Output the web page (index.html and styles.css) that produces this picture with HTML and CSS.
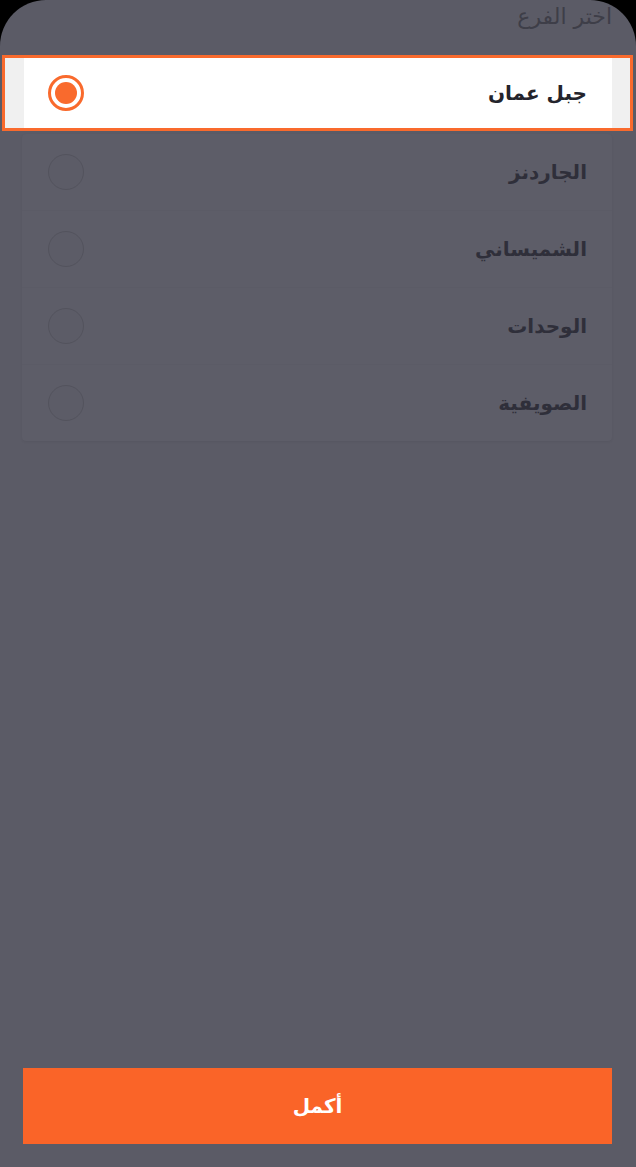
FILE: index.html
```html
<!DOCTYPE html>
<html lang="ar" dir="rtl">
<head>
<meta charset="utf-8">
<title>اختر الفرع</title>
<link rel="stylesheet" href="styles.css">
</head>
<body>
<div class="sheet">
  <div class="title">اختر الفرع</div>
  <div class="spotlight">
    <div class="row row-selected">
      <span class="label">جبل عمان</span>
      <span class="radio radio-on"><span class="dot"></span></span>
    </div>
  </div>
  <div class="card">
    <div class="row"><span class="label">الجاردنز</span><span class="radio"></span></div>
    <div class="row"><span class="label">الشميساني</span><span class="radio"></span></div>
    <div class="row"><span class="label">الوحدات</span><span class="radio"></span></div>
    <div class="row"><span class="label">الصويفية</span><span class="radio"></span></div>
  </div>
  <button class="btn">أكمل</button>
</div>
</body>
</html>
```
FILE: styles.css
```css
html, body {
  margin: 0;
  padding: 0;
  background: #000;
}
body {
  font-family: "DejaVu Sans", "Noto Sans", sans-serif;
}
.sheet {
  height: 1167px;
  box-sizing: border-box;
  background: #5b5b66;
  border-radius: 46px 46px 0 0;
  display: flex;
  flex-direction: column;
  padding-bottom: 23px;
}
.title {
  color: #3e3e48;
  font-size: 22px;
  line-height: 30px;
  padding-right: 24px;
  margin-top: 2px;
  height: 53px;
  box-sizing: border-box;
}
.spotlight {
  margin: 0 3px 0 2px;
  border: 3px solid #f96a2d;
  background: #f0f0f0;
  padding: 0 18px 0 19px;
}
.row {
  height: 76px;
  display: flex;
  align-items: center;
  justify-content: space-between;
  padding: 0 25px 0 26px;
  box-sizing: border-box;
}
.row-selected {
  background: #fff;
  height: 70px;
  padding-left: 24px;
}
.label {
  font-size: 20px;
  font-weight: bold;
  color: #2f2f3a;
}
.row-selected .label {
  color: #24242c;
}
.radio {
  width: 36px;
  height: 36px;
  box-sizing: border-box;
  border-radius: 50%;
  border: 1.5px solid #53535d;
  background: #5c5c67;
  display: flex;
  align-items: center;
  justify-content: center;
}
.radio-on {
  border: 3.5px solid #f96a2d;
  background: #fff;
}
.dot {
  width: 22px;
  height: 22px;
  border-radius: 50%;
  background: #f96a2d;
}
.card {
  margin: 3px 24px 0 22px;
  background: #5d5d68;
  border-radius: 4px;
  box-shadow: 0 1px 3px rgba(0,0,0,0.06);
}
.card .row + .row {
  border-top: 1px solid #5b5b66;
  height: 77px;
}
.btn {
  margin: auto 24px 0 23px;
  height: 76px;
  border: none;
  background: #fa6428;
  color: #fff;
  font-family: "DejaVu Sans", "Noto Sans", sans-serif;
  font-size: 20px;
  font-weight: bold;
}
```
